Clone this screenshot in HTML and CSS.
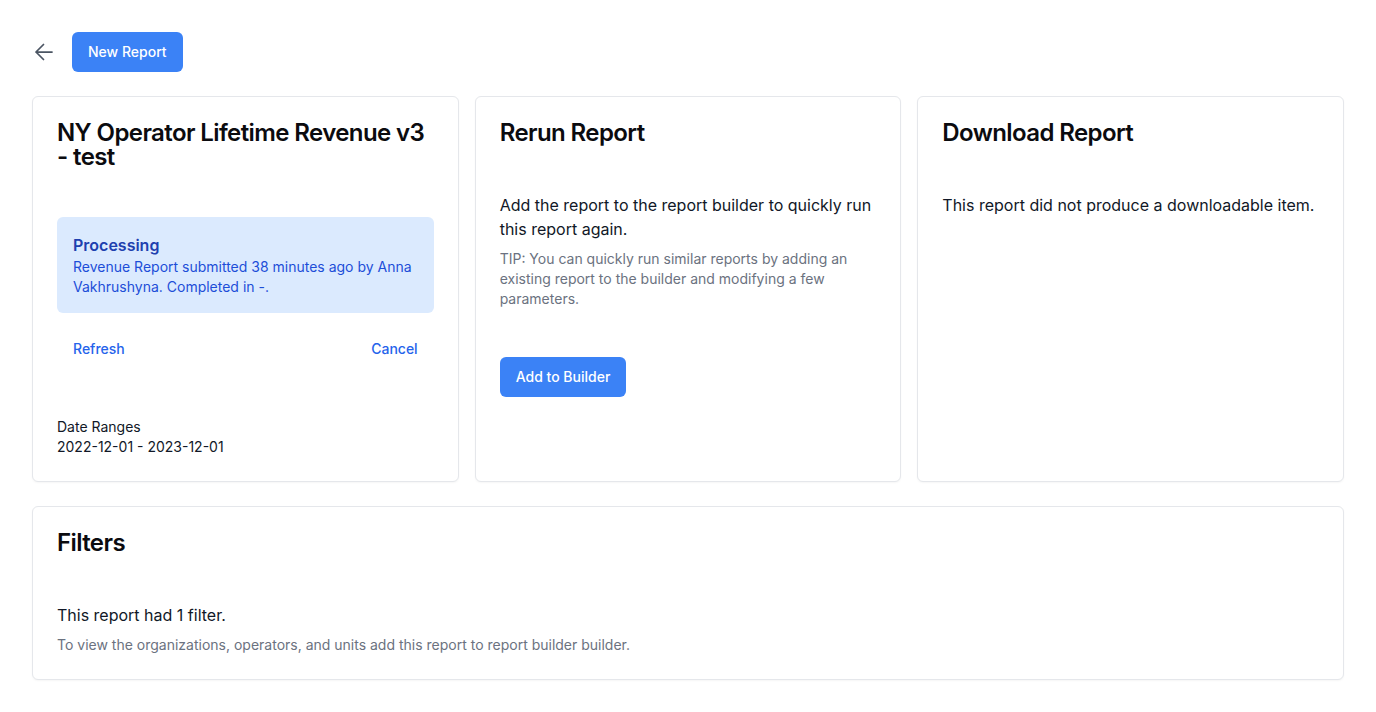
FILE: index.html
```html
<!DOCTYPE html>
<html lang="en">
<head>
<meta charset="utf-8">
<title>Report</title>
<link rel="stylesheet" href="styles.css">
</head>
<body>
<div class="page">
  <div class="topbar">
    <a class="back" href="#" aria-label="Back">
      <svg width="24" height="24" viewBox="0 0 24 24" fill="none" stroke="#4b5563" stroke-width="1.75" stroke-linecap="round" stroke-linejoin="round"><path d="M11.5 4.5 4 12l7.5 7.5M4 12h16"/></svg>
    </a>
    <button class="btn">New Report</button>
  </div>

  <div class="grid">
    <section class="card">
      <h2 class="title">NY Operator Lifetime Revenue v3 - test</h2>
      <div class="status">
        <div class="status-title">Processing</div>
        <div class="status-text">Revenue Report submitted 38 minutes ago by Anna Vakhrushyna. Completed in -.</div>
      </div>
      <div class="links">
        <a href="#" class="link">Refresh</a>
        <a href="#" class="link">Cancel</a>
      </div>
      <div class="dates">
        <div>Date Ranges</div>
        <div>2022-12-01 - 2023-12-01</div>
      </div>
    </section>

    <section class="card">
      <h2 class="title">Rerun Report</h2>
      <p class="body">Add the report to the report builder to quickly run this report again.</p>
      <p class="tip">TIP: You can quickly run similar reports by adding an existing report to the builder and modifying a few parameters.</p>
      <div class="actions"><button class="btn">Add to Builder</button></div>
    </section>

    <section class="card">
      <h2 class="title">Download Report</h2>
      <p class="body">This report did not produce a downloadable item.</p>
    </section>
  </div>

  <section class="card filters">
    <h2 class="title">Filters</h2>
    <p class="body">This report had 1 filter.</p>
    <p class="tip">To view the organizations, operators, and units add this report to report builder builder.</p>
  </section>
</div>
</body>
</html>
```

FILE: styles.css
```css
* { box-sizing: border-box; }
html, body { margin: 0; padding: 0; background: #fff; }
body {
  font-family: Inter, "Noto Sans", sans-serif;
  color: #111827;
  -webkit-font-smoothing: antialiased;
}
.page { padding: 32px; }
.topbar { display: flex; align-items: center; gap: 16px; height: 40px; }
.back { display: flex; width: 24px; height: 24px; }
.btn {
  font-family: inherit;
  font-size: 14px;
  line-height: 20px;
  font-weight: 500;
  color: #fff;
  background: #3b82f6;
  border: 0;
  border-radius: 6px;
  padding: 10px 16px;
  height: 40px;
  cursor: pointer;
}
.grid {
  display: grid;
  grid-template-columns: repeat(3, 1fr);
  gap: 16px;
  margin-top: 24px;
}
.card {
  border: 1px solid #e5e7eb;
  border-radius: 6px;
  box-shadow: 0 1px 2px rgba(0,0,0,0.04);
  padding: 24px;
  background: #fff;
}
.title {
  margin: 0 0 48px;
  font-size: 24px;
  line-height: 24px;
  font-weight: 600;
  letter-spacing: -0.025em;
  color: #0b0b0f;
}
.status {
  background: #dbeafe;
  border-radius: 6px;
  padding: 16px;
}
.status-title { font-size: 16px; line-height: 24px; font-weight: 600; color: #1e40af; }
.status-text { font-size: 14px; line-height: 20px; color: #1d4ed8; }
.links {
  display: flex;
  justify-content: space-between;
  margin-top: 18px;
}
.link {
  font-size: 14px;
  line-height: 20px;
  font-weight: 500;
  color: #2563eb;
  text-decoration: none;
  padding: 8px 16px;
}
.dates { margin-top: 50px; font-size: 14px; line-height: 20px; color: #111827; }
.body { margin: 0; font-size: 16px; line-height: 24px; color: #111827; }
.tip { margin: 8px 0 0; font-size: 14px; line-height: 20px; color: #6b7280; }
.actions { margin-top: 48px; }
.filters { margin-top: 24px; }
```
